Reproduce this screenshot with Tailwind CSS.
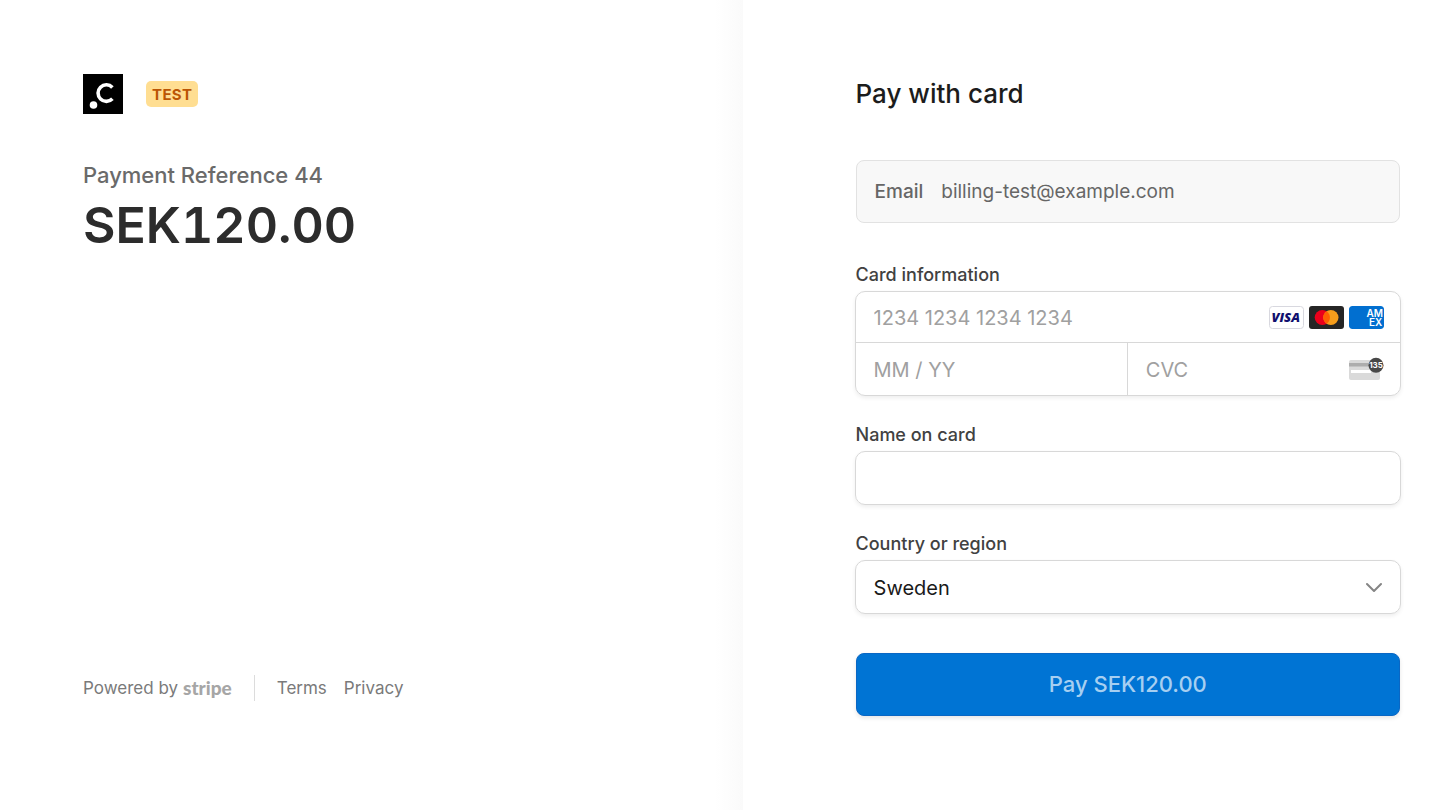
<!DOCTYPE html>
<html lang="en">
<head>
    <meta charset="UTF-8">
    <meta name="viewport" content="width=device-width, initial-scale=1.0">
    <title>Pay with card</title>
    <script src="https://cdn.jsdelivr.net/npm/@tailwindcss/browser@4"></script>
</head>
<body class="bg-white font-['Inter',sans-serif] antialiased">
    <div class="flex flex-col md:flex-row min-h-screen">
        <!-- Order summary -->
        <section class="flex flex-col w-full md:w-[51%] pl-[83px] pr-8 pt-[74px] pb-[108px] bg-linear-to-l from-[#fafafa] to-white to-[28px]">
            <header class="flex items-center gap-[23px]">
                <svg class="size-10" viewBox="0 0 40 40" role="img" aria-label="Company logo">
                    <rect width="40" height="40" fill="#000"/>
                    <path d="M29.4 13.4A8.3 8.3 0 1 0 29.4 24.8" fill="none" stroke="#fff" stroke-width="3.6"/>
                    <circle cx="10.5" cy="31" r="3.8" fill="#fff"/>
                </svg>
                <span class="h-[26px] px-[6px] rounded-[5px] bg-[#ffde92] text-[#bb5504] text-[15px] leading-[27px] font-bold tracking-wide">TEST</span>
            </header>
            <p class="mt-[47px] text-[22px] leading-7 font-medium text-[#6a6a6a]">Payment Reference 44</p>
            <h1 class="mt-[6px] text-[50px] leading-[60px] font-semibold tabular-nums text-[#2c2c2c]">SEK120.00</h1>
            <footer class="mt-auto flex items-center h-7 text-[17px] leading-7 text-[#7a7a7a]">
                <span>Powered by</span>
                <a href="#" class="ml-[5px] font-['Lato',sans-serif] font-black text-[19px] text-[#a6a6a6]">stripe</a>
                <span class="mx-[22px] w-px h-[26px] bg-[#dcdcdc]"></span>
                <a href="#">Terms</a>
                <a href="#" class="ml-[17px]">Privacy</a>
            </footer>
        </section>

        <!-- Card form -->
        <main class="flex-1 pl-[113px] pr-14 pt-[76px] pb-[94px]">
            <h2 class="text-[26px] leading-9 font-medium text-[#1c1c1c]">Pay with card</h2>
            <form>
                <div class="mt-[48px] flex items-center h-[63px] pt-[2px] px-[18px] gap-[18px] rounded-lg border border-[#e2e2e2] bg-[#f8f8f8] text-[19px] text-[#666]">
                    <label for="email" class="font-medium">Email</label>
                    <input id="email" type="email" value="billing-test@example.com" readonly class="flex-1 min-w-0 bg-transparent outline-none">
                </div>

                <fieldset>
                    <legend class="pt-[40px] mb-1 text-[18px] leading-6 font-medium text-[#414141]">Card information</legend>
                    <div class="-mx-px rounded-[10px] border border-[#d8d8d8] shadow-[0_2px_4px_rgba(0,0,0,0.07)] text-[20px]">
                        <div class="flex items-center h-[51px] pl-[18px] pr-4 border-b border-[#d8d8d8]">
                            <input type="text" aria-label="Card number" placeholder="1234 1234 1234 1234" class="flex-1 min-w-0 pt-[2px] outline-none placeholder:text-[#a0a0a0]">
                            <div class="flex gap-[5px]">
                                <svg class="w-[35px] h-[23px]" viewBox="0 0 35 23" role="img" aria-label="Visa">
                                    <rect x="0.5" y="0.5" width="34" height="22" rx="3" fill="#fff" stroke="#d8d8df"/>
                                    <text x="2.5" y="16" font-family="Open Sans" font-size="13" font-weight="800" font-style="italic" fill="#10106e">VISA</text>
                                </svg>
                                <svg class="w-[35px] h-[23px]" viewBox="0 0 35 23" role="img" aria-label="Mastercard">
                                    <rect width="35" height="23" rx="3" fill="#252525"/>
                                    <circle cx="13.3" cy="11.5" r="7.6" fill="#eb001b"/>
                                    <circle cx="21.9" cy="11.5" r="7.6" fill="#f79e1b"/>
                                    <path d="M17.6 5.2a7.6 7.6 0 0 1 0 12.6a7.6 7.6 0 0 1 0-12.6z" fill="#ff5f00"/>
                                </svg>
                                <svg class="w-[35px] h-[23px] rounded-[3px]" viewBox="0 0 35 23" role="img" aria-label="American Express">
                                    <rect width="35" height="23" rx="3" fill="#016fd0"/>
                                    <text font-family="Inter" font-size="10" font-weight="600" fill="#fff"><tspan x="17.5" y="11">AM</tspan><tspan x="20" y="20">EX</tspan></text>
                                </svg>
                            </div>
                        </div>
                        <div class="flex h-[52px]">
                            <div class="flex items-center w-1/2 px-[18px] border-r border-[#d8d8d8]">
                                <input type="text" aria-label="Expiration" placeholder="MM / YY" class="w-full min-w-0 pt-[2px] outline-none placeholder:text-[#a0a0a0]">
                            </div>
                            <div class="flex items-center w-1/2 pl-[18px] pr-4">
                                <input type="text" aria-label="CVC" placeholder="CVC" class="flex-1 min-w-0 pt-[2px] outline-none placeholder:text-[#a0a0a0]">
                                <svg class="w-[36px] h-[24px]" viewBox="0 0 36 24" aria-hidden="true">
                                    <rect x="1" y="3" width="31" height="20" rx="2" fill="#dadada"/>
                                    <path d="M1 6h31v3.5H1z" fill="#adadad"/>
                                    <path d="M3 13h20v3H3z" fill="#fff"/>
                                    <circle cx="28" cy="8.2" r="7.5" fill="#484848"/>
                                    <text x="28" y="11" text-anchor="middle" font-family="Inter" font-size="8" font-weight="700" fill="#fff">135</text>
                                </svg>
                            </div>
                        </div>
                    </div>
                </fieldset>

                <label for="name" class="block mt-[27px] mb-1 text-[18px] leading-6 font-medium text-[#414141]">Name on card</label>
                <div class="-mx-px rounded-[10px] border border-[#d8d8d8] shadow-[0_2px_4px_rgba(0,0,0,0.07)] text-[20px]">
                    <input id="name" type="text" class="block w-full h-[52px] px-[18px] outline-none">
                </div>

                <label for="country" class="block mt-[27px] mb-1 text-[18px] leading-6 font-medium text-[#414141]">Country or region</label>
                <div class="relative -mx-px rounded-[10px] border border-[#d8d8d8] shadow-[0_2px_4px_rgba(0,0,0,0.07)] text-[20px]">
                    <select id="country" class="block appearance-none w-full h-[52px] pt-[2px] px-[18px] text-[#1a1a1a] outline-none">
                        <option>Sweden</option>
                    </select>
                    <svg class="absolute right-[18px] top-[21px] w-4 h-[11px] pointer-events-none" viewBox="0 0 16 11" fill="none" stroke="#858585" stroke-width="2" stroke-linecap="round" stroke-linejoin="round">
                        <path d="M1 2l7 7 7-7"/>
                    </svg>
                </div>

                <button type="submit" class="mt-[39px] w-full h-[63px] rounded-lg border border-[#0a67c4] bg-[#0074d4] text-[22px] font-medium text-[#a6cff1] shadow-[0_2px_4px_rgba(0,0,0,0.1)]">Pay SEK120.00</button>
            </form>
        </main>
    </div>
</body>
</html>
